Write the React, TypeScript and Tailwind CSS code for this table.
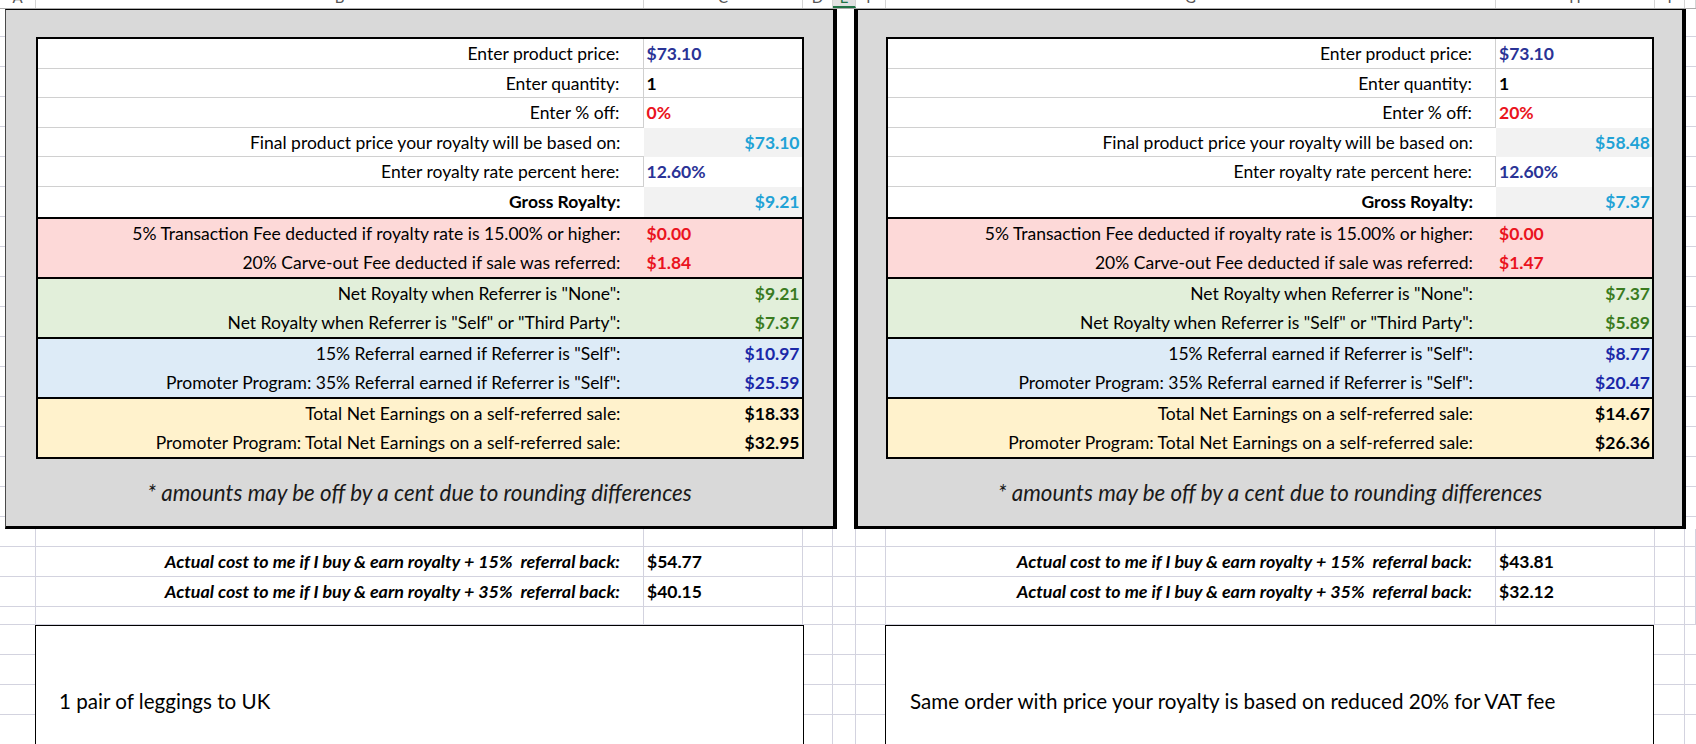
import React from "react";

// Spreadsheet screenshot: two royalty calculators side by side.

type Tone = "navy" | "black" | "red" | "sky" | "green" | "blue";

const toneClass: Record<Tone, string> = {
  navy: "text-[#2a3396]",
  black: "text-black",
  red: "text-[#ea1320]",
  sky: "text-[#21a2d6]",
  green: "text-[#3a7b1f]",
  blue: "text-[#1a28a8]",
};

interface Line {
  label: string;
  value: string;
  tone: Tone;
  right?: boolean;
  shaded?: boolean;
  strong?: boolean;
}

interface Calc {
  inputs: Line[];
  sections: { bg: string; lines: Line[] }[];
  actual: [string, string];
  note: string;
}

function makeCalc(v: string[], actual: [string, string], note: string): Calc {
  return {
    inputs: [
      { label: "Enter product price:", value: "$73.10", tone: "navy" },
      { label: "Enter quantity:", value: "1", tone: "black" },
      { label: "Enter % off:", value: v[0], tone: "red" },
      { label: "Final product price your royalty will be based on:", value: v[1], tone: "sky", right: true, shaded: true },
      { label: "Enter royalty rate percent here:", value: "12.60%", tone: "navy" },
      { label: "Gross Royalty:", value: v[2], tone: "sky", right: true, shaded: true, strong: true },
    ],
    sections: [
      {
        bg: "bg-[#fdd9d8]",
        lines: [
          { label: "5% Transaction Fee deducted if royalty rate is 15.00% or higher:", value: "$0.00", tone: "red" },
          { label: "20% Carve-out Fee deducted if sale was referred:", value: v[3], tone: "red" },
        ],
      },
      {
        bg: "bg-[#e2efda]",
        lines: [
          { label: 'Net Royalty when Referrer is "None":', value: v[2], tone: "green", right: true },
          { label: 'Net Royalty when Referrer is "Self" or "Third Party":', value: v[4], tone: "green", right: true },
        ],
      },
      {
        bg: "bg-[#ddebf7]",
        lines: [
          { label: '15% Referral earned if Referrer is "Self":', value: v[5], tone: "blue", right: true },
          { label: 'Promoter Program: 35% Referral earned if Referrer is "Self":', value: v[6], tone: "blue", right: true },
        ],
      },
      {
        bg: "bg-[#fff2cc]",
        lines: [
          { label: "Total Net Earnings on a self-referred sale:", value: v[7], tone: "black", right: true },
          { label: "Promoter Program: Total Net Earnings on a self-referred sale:", value: v[8], tone: "black", right: true },
        ],
      },
    ],
    actual,
    note,
  };
}

const LEFT = makeCalc(
  ["0%", "$73.10", "$9.21", "$1.84", "$7.37", "$10.97", "$25.59", "$18.33", "$32.95"],
  ["$54.77", "$40.15"],
  "1 pair of leggings to UK"
);

const RIGHT = makeCalc(
  ["20%", "$58.48", "$7.37", "$1.47", "$5.89", "$8.77", "$20.47", "$14.67", "$26.36"],
  ["$43.81", "$32.12"],
  "Same order with price your royalty is based on reduced 20% for VAT fee"
);

// column widths of the sheet (A..J)
const COLS = [
  { name: "A", w: 36 },
  { name: "B", w: 608 },
  { name: "C", w: 159 },
  { name: "D", w: 30 },
  { name: "E", w: 23 },
  { name: "F", w: 30 },
  { name: "G", w: 610 },
  { name: "H", w: 159 },
  { name: "I", w: 30 },
  { name: "J", w: 11 },
];

const GRID = "border-[#d3d3df]";
const CELL = "border-[#d0d0d0]";

function HeaderRow() {
  return (
    <div className="flex h-[9px] overflow-hidden border-b border-[#ababab] bg-white">
      {COLS.map((c) => (
        <div
          key={c.name}
          style={{ width: c.w }}
          className={`flex shrink-0 justify-center border-r border-[#d4d4d4] ${
            c.name === "E" ? "border-b-2 border-b-[#217346] bg-[#e1e1e1] text-[#217346]" : "text-[#555]"
          }`}
        >
          {c.name !== "J" && <span className="-mt-[10px] text-[15px] leading-[15px]">{c.name}</span>}
        </div>
      ))}
    </div>
  );
}

function GridStrip({ width, first, rows, vlines = [] }: { width: number; first: number; rows: number; vlines?: number[] }) {
  return (
    <div style={{ width }} className="relative shrink-0 overflow-hidden">
      <div style={{ height: first }} className={`border-b ${GRID}`} />
      {Array.from({ length: rows }).map((_, i) => (
        <div key={i} className={`h-[30px] border-b ${GRID}`} />
      ))}
      {vlines.map((x) => (
        <div key={x} style={{ left: x }} className={`absolute top-0 bottom-0 border-l ${GRID}`} />
      ))}
    </div>
  );
}

function CalcTable({ calc, labelW }: { calc: Calc; labelW: number }) {
  return (
    <div className="w-[768px] border-2 border-black bg-white text-[17.5px] text-black">
      {calc.inputs.map((l, i) => {
        const last = i === calc.inputs.length - 1;
        const next = calc.inputs[i + 1];
        return (
          <div key={l.label} className="flex h-[29.6px]">
            <div
              style={{ width: labelW }}
              className={`shrink-0 pr-[23px] text-right leading-[29px] ${last ? "" : `border-b ${CELL}`} ${
                l.shaded ? "" : `border-r ${CELL}`
              } ${l.strong ? "font-bold" : ""}`}
            >
              {l.label}
            </div>
            <div
              className={`flex-1 font-bold leading-[29px] ${toneClass[l.tone]} ${
                l.right ? "pr-[2px] text-right" : "pl-[3px]"
              } ${l.shaded ? "bg-[#f2f2f2]" : ""} ${!l.shaded && !last && !next?.shaded ? `border-b ${CELL}` : ""}`}
            >
              {l.value}
            </div>
          </div>
        );
      })}
      {calc.sections.map((s, si) => (
        <div key={si} className={`border-t-2 border-black ${s.bg}`}>
          {s.lines.map((l) => (
            <div key={l.label} className="flex h-[29px]">
              <div style={{ width: labelW }} className="shrink-0 pr-[23px] text-right leading-[29px]">
                {l.label}
              </div>
              <div
                className={`flex-1 font-bold leading-[29px] ${toneClass[l.tone]} ${
                  l.right ? "pr-[2px] text-right" : "pl-[3px]"
                }`}
              >
                {l.value}
              </div>
            </div>
          ))}
        </div>
      ))}
    </div>
  );
}

function Panel({ calc, side }: { calc: Calc; side: "left" | "right" }) {
  return (
    <div
      className={`flex h-[520px] w-[832px] shrink-0 flex-col border-t border-r-4 border-b-[3px] border-black bg-[#d9d9d9] ${
        side === "left" ? "border-l border-l-[#4a4a4a]" : "border-l-4"
      }`}
    >
      <div className="mt-[27px] flex justify-center">
        <CalcTable calc={calc} labelW={side === "left" ? 606 : 608} />
      </div>
      <div className="flex flex-1 items-center justify-center pt-[2px] text-[22.4px] text-[#1a1a1a] italic">
        * amounts may be off by a cent due to rounding differences
      </div>
    </div>
  );
}

function ActualRows() {
  const rowH = [18, 30, 30, 18];
  return (
    <div className="flex flex-col">
      {rowH.map((h, r) => (
        <div key={r} style={{ height: h }} className="flex">
          {COLS.map((c) => {
            const calc = c.name === "B" || c.name === "C" ? LEFT : RIGHT;
            const hasText = r === 1 || r === 2;
            const pct = r === 1 ? "15%" : "35%";
            return (
              <div
                key={c.name}
                style={{ width: c.w }}
                className={`shrink-0 overflow-hidden border-r border-b ${GRID} text-[17.5px] leading-[29px]`}
              >
                {hasText && (c.name === "B" || c.name === "G") && (
                  <div className="pr-[23px] text-right text-[17.9px] font-bold italic whitespace-pre">
                    {`Actual cost to me if I buy & earn royalty + ${pct}  referral back:`}
                  </div>
                )}
                {hasText && (c.name === "C" || c.name === "H") && (
                  <div className="pl-[3px] font-bold">{calc.actual[r - 1]}</div>
                )}
              </div>
            );
          })}
        </div>
      ))}
    </div>
  );
}

function NoteBox({ text, pl }: { text: string; pl: number }) {
  return (
    <div
      style={{ paddingLeft: pl }}
      className="h-[119px] w-[769px] shrink-0 border-t border-r border-l border-black bg-white pt-[62px] text-[20.6px] leading-[26px] text-black"
    >
      {text}
    </div>
  );
}

export default function App() {
  return (
    <div className="h-[744px] w-[1696px] overflow-hidden bg-white font-[family-name:Lato,sans-serif]">
      <HeaderRow />
      <div className="flex h-[520px]">
        <GridStrip width={5} first={28} rows={17} />
        <Panel calc={LEFT} side="left" />
        <div className="w-[17px] shrink-0" />
        <Panel calc={RIGHT} side="right" />
        <GridStrip width={10} first={28} rows={17} />
      </div>
      <ActualRows />
      <div className="flex">
        <GridStrip width={35} first={30} rows={3} />
        <NoteBox text={LEFT.note} pl={23} />
        <GridStrip width={81} first={30} rows={3} vlines={[28, 51]} />
        <NoteBox text={RIGHT.note} pl={24} />
        <GridStrip width={42} first={30} rows={3} vlines={[30]} />
      </div>
    </div>
  );
}
